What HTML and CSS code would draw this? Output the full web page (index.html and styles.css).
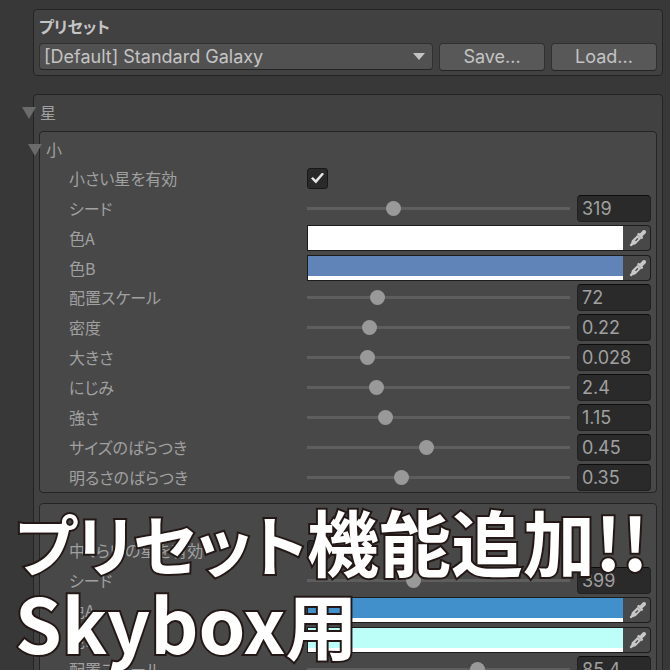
FILE: index.html
```html
<!doctype html>
<html lang="ja">
  <head>
    <meta charset="UTF-8" />
    <meta name="viewport" content="width=device-width, initial-scale=1.0" />
    <title>プリセット機能追加!! Skybox用</title>
    <link rel="stylesheet" href="styles.css">
  </head>
  <body>
    <svg class="defs" aria-hidden="true">
      <symbol id="dropper" viewBox="0 0 18 18">
        <path d="M8 5.2 L9.4 3.8 L11 4.6 L13.4 1.8 Q14.8 0.4 16.6 1.6 Q17.8 3.4 16.2 4.8 L13.4 7.2 L14.2 8.8 L12.8 10.2 Z" />
        <path fill-rule="evenodd" d="M8.4 6 L12.2 9.6 L6.6 15.2 L4 16 L2 17.4 L0.6 16 L2.2 14 L2.8 11.4 Z M8.4 9 L6 11.4 L7 12.2 L9.4 9.8 Z" />
      </symbol>
    </svg>

    <main class="inspector">
      <section class="box preset">
        <label class="preset-title" for="preset">プリセット</label>
        <div class="preset-bar">
          <div class="dropdown">
            <select id="preset">
              <option>[Default] Standard Galaxy</option>
            </select>
          </div>
          <button class="btn" type="button">Save...</button>
          <button class="btn" type="button">Load...</button>
        </div>
      </section>

      <section class="box stars">
        <button class="foldout" type="button">星</button>

        <div class="box group">
          <button class="foldout" type="button">小</button>
          <div class="rows">
            <div class="row">
              <label for="s-on">小さい星を有効</label>
              <input class="check" type="checkbox" id="s-on" checked />
            </div>
            <div class="row">
              <label for="s-seed">シード</label>
              <input class="slider" type="range" aria-label="シード" max="1000" step="any" value="319" />
              <input class="num" type="text" id="s-seed" value="319" />
            </div>
            <div class="row color">
              <label for="s-a">色A</label>
              <button class="swatch white" type="button" id="s-a"></button>
              <button class="pick" type="button" aria-label="色A スポイト"><svg><use href="#dropper" /></svg></button>
            </div>
            <div class="row color">
              <label for="s-b">色B</label>
              <button class="swatch blue" type="button" id="s-b"></button>
              <button class="pick" type="button" aria-label="色B スポイト"><svg><use href="#dropper" /></svg></button>
            </div>
            <div class="row">
              <label for="s-scale">配置スケール</label>
              <input class="slider" type="range" aria-label="配置スケール" max="282" step="any" value="72" />
              <input class="num" type="text" id="s-scale" value="72" />
            </div>
            <div class="row">
              <label for="s-density">密度</label>
              <input class="slider" type="range" aria-label="密度" max="1" step="any" value="0.22" />
              <input class="num" type="text" id="s-density" value="0.22" />
            </div>
            <div class="row">
              <label for="s-size">大きさ</label>
              <input class="slider" type="range" aria-label="大きさ" max="0.13" step="any" value="0.028" />
              <input class="num" type="text" id="s-size" value="0.028" />
            </div>
            <div class="row">
              <label for="s-blur">にじみ</label>
              <input class="slider" type="range" aria-label="にじみ" max="9.6" step="any" value="2.4" />
              <input class="num" type="text" id="s-blur" value="2.4" />
            </div>
            <div class="row">
              <label for="s-power">強さ</label>
              <input class="slider" type="range" aria-label="強さ" max="4" step="any" value="1.15" />
              <input class="num" type="text" id="s-power" value="1.15" />
            </div>
            <div class="row">
              <label for="s-sizevar">サイズのばらつき</label>
              <input class="slider" type="range" aria-label="サイズのばらつき" max="1" step="any" value="0.45" />
              <input class="num" type="text" id="s-sizevar" value="0.45" />
            </div>
            <div class="row">
              <label for="s-lightvar">明るさのばらつき</label>
              <input class="slider" type="range" aria-label="明るさのばらつき" max="1" step="any" value="0.35" />
              <input class="num" type="text" id="s-lightvar" value="0.35" />
            </div>
          </div>
        </div>

        <div class="box group untitled">
          <div class="rows">
            <div class="row">
              <label for="m-on">中くらいの星を有効</label>
              <input class="check" type="checkbox" id="m-on" />
            </div>
            <div class="row">
              <label for="m-seed">シード</label>
              <input class="slider" type="range" aria-label="シード" max="1000" step="any" value="399" />
              <input class="num" type="text" id="m-seed" value="399" />
            </div>
            <div class="row color">
              <label for="m-a">色A</label>
              <button class="swatch azure" type="button" id="m-a"></button>
              <button class="pick" type="button" aria-label="色A スポイト"><svg><use href="#dropper" /></svg></button>
            </div>
            <div class="row color">
              <label for="m-b">色B</label>
              <button class="swatch mint" type="button" id="m-b"></button>
              <button class="pick" type="button" aria-label="色B スポイト"><svg><use href="#dropper" /></svg></button>
            </div>
            <div class="row">
              <label for="m-scale">配置スケール</label>
              <input class="slider" type="range" aria-label="配置スケール" max="130" step="any" value="85.4" />
              <input class="num" type="text" id="m-scale" value="85.4" />
            </div>
          </div>
        </div>
      </section>

      <h1 class="caption"><span class="kana">プリセット</span>機能追加!!<br /><span class="latin">Skybox</span>用</h1>
    </main>
  </body>
</html>
```
FILE: styles.css
```css
* {
  margin: 0;
  padding: 0;
  box-sizing: border-box;
}

body {
  background: #383838;
  color: #a0a0a0;
  font-family: Inter, 'Noto Sans CJK JP', sans-serif;
  font-size: 18px;
  line-height: 26px;
}

button,
input,
select {
  font: inherit;
  color: inherit;
  border: none;
  background: none;
}

.defs {
  position: absolute;
  width: 0;
  height: 0;
}

.inspector {
  position: relative;
  height: 100vh;
  overflow: hidden;
  padding: 9px 7px 0 33px;
}

.box {
  border: 1px solid #242424;
  border-radius: 4px;
  background: #414141;
}

/* Preset bar */
.preset {
  padding: 3px 5px 4px;
  margin-bottom: 18px;
  color: #c4c4c4;
}

.preset-title {
  display: block;
  font-family: 'Noto Sans CJK JP', sans-serif;
  font-size: 16px;
  font-weight: 700;
  font-feature-settings: 'palt';
  height: 30px;
}

.preset-bar {
  display: flex;
  gap: 6px;
}

.dropdown {
  position: relative;
  flex: 1;
}

.dropdown select {
  display: block;
  appearance: none;
  width: 100%;
  height: 27px;
  padding: 0 24px 0 4px;
  border: 1px solid #303030;
  border-bottom-color: #242424;
  border-radius: 4px;
  background: #515151;
}

.dropdown::after {
  content: '';
  position: absolute;
  right: 8px;
  top: 10px;
  border: 6px solid transparent;
  border-top: 7px solid #c4c4c4;
  border-bottom: none;
  pointer-events: none;
}

.btn {
  width: 106px;
  height: 28px;
  border: 1px solid #303030;
  border-bottom-color: #242424;
  border-radius: 4px;
  background: #585858;
}

/* Foldouts */
.stars {
  padding: 3px 5px 8px;
}

.foldout {
  position: relative;
  display: block;
  height: 30px;
  padding: 0 0 2px 1px;
  font-family: 'Noto Sans CJK JP', sans-serif;
  font-size: 16px;
  line-height: 28px;
}

.foldout::before {
  content: '';
  position: absolute;
  left: -17px;
  top: 9px;
  border: 7px solid transparent;
  border-top: 12px solid #6b6b6b;
  border-bottom: none;
}

.group {
  padding: 3px 5px 2px;
  margin-bottom: 10px;
  background: #484848;
}

.untitled {
  padding-top: 33px;
}

.stars > .foldout {
  margin-bottom: 3px;
}

.rows {
  display: flex;
  flex-direction: column;
  gap: 4px;
  padding-left: 24px;
}

.row {
  display: flex;
  align-items: center;
  height: 26px;
}

.color + .color {
  height: 25px;
}

.row label {
  width: 238px;
  font-family: 'Noto Sans CJK JP', sans-serif;
  font-size: 16px;
  font-feature-settings: 'palt';
}

.check {
  appearance: none;
  display: grid;
  place-items: center;
  width: 21px;
  height: 21px;
  border: 1px solid #181818;
  border-radius: 3px;
  background: #2a2a2a;
}

.check:checked::before {
  content: '';
  width: 13px;
  height: 11px;
  background: #e6e6e6;
  clip-path: polygon(0 54%, 14% 40%, 36% 66%, 86% 0, 100% 14%, 38% 100%);
}

.slider {
  appearance: none;
  flex: 1;
  min-width: 0;
  height: 16px;
  margin-right: 7px;
}

.slider::-webkit-slider-runnable-track {
  height: 3px;
  background: #5e5e5e;
}

.slider::-webkit-slider-thumb {
  appearance: none;
  width: 15px;
  height: 15px;
  margin-top: -6px;
  border-radius: 50%;
  background: #999;
}

.num {
  width: 74px;
  height: 27px;
  padding: 1px 4px 0;
  border: 1px solid #212121;
  border-top-color: #0d0d0d;
  border-radius: 4px;
  background: #2a2a2a;
}

/* Colour fields: the strip along the bottom shows alpha */
.swatch {
  flex: 1;
  height: 26px;
  border: 1px solid #1c1c1c;
  border-right: none;
  box-shadow: inset 0 -4px #fff;
}

.white {
  background: #fff;
}

.blue {
  background: #6084b8;
}

.azure {
  background: #4290cb;
}

.mint {
  background: #bcfff9;
}

.pick {
  width: 28px;
  height: 26px;
  border: 1px solid #1c1c1c;
  border-left: none;
  border-radius: 0 4px 4px 0;
  background: #484848;
}

.pick svg {
  display: block;
  width: 18px;
  height: 18px;
  margin: 0 3px 0 auto;
  fill: #c8c8c8;
}

/* Headline laid over the panel */
.caption {
  position: absolute;
  left: 15px;
  top: 500px;
  color: #fff;
  font-family: 'Noto Sans CJK JP', sans-serif;
  font-size: 72px;
  font-weight: 700;
  font-feature-settings: 'palt';
  line-height: 80px;
  white-space: nowrap;
  -webkit-text-stroke: 4px #231815;
  paint-order: stroke fill;
}

.caption .kana {
  font-size: 66px;
}

.caption .latin {
  font-size: 75px;
}
```
